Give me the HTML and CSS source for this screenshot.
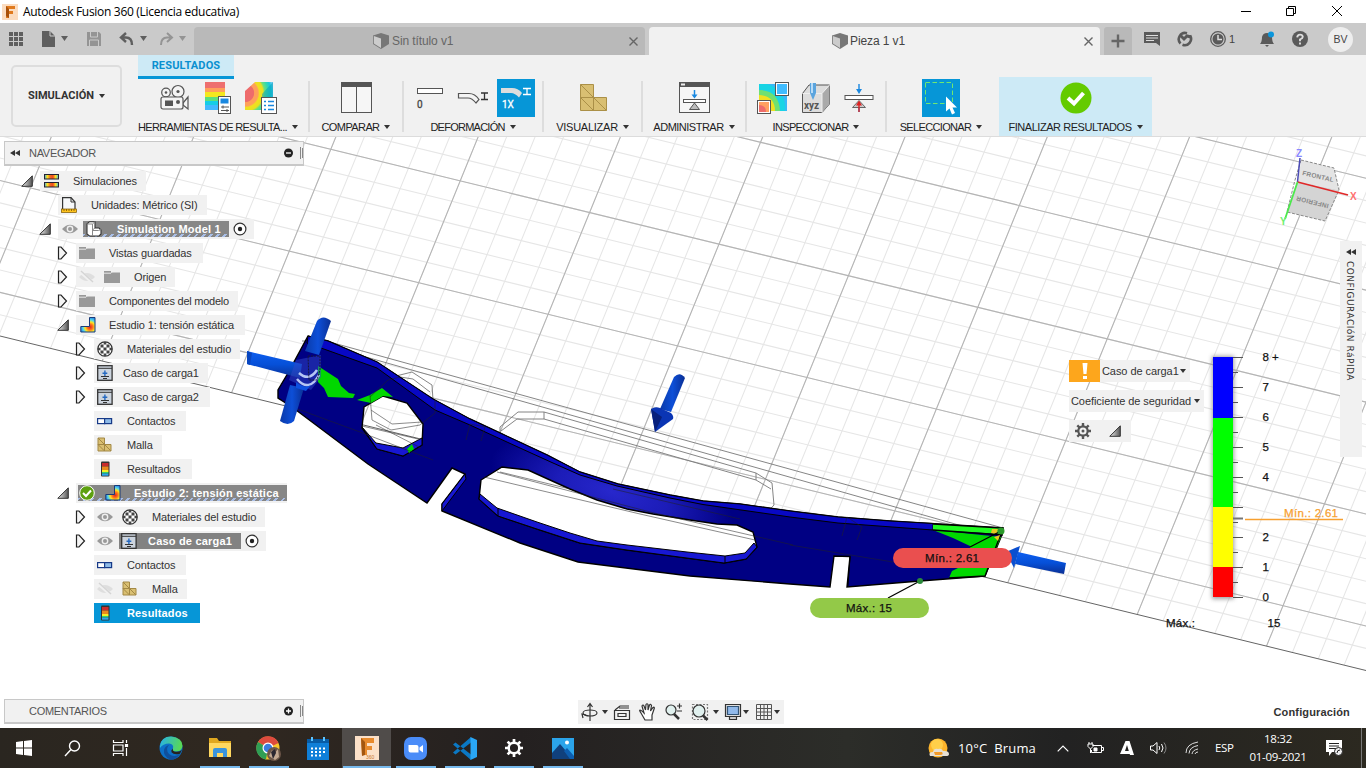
FILE: index.html
```html
<!DOCTYPE html>
<html lang="es">
<head>
<meta charset="utf-8">
<title>Autodesk Fusion 360 (Licencia educativa)</title>
<link rel="stylesheet" href="styles.css">
</head>
<body>
<svg width="0" height="0" class="defs">
  <defs>
    <linearGradient id="rain" x1="0" y1="0" x2="0" y2="1">
      <stop offset="0" stop-color="#d43a3a"/><stop offset=".35" stop-color="#f37a20"/><stop offset=".55" stop-color="#ffe600"/><stop offset=".75" stop-color="#35d46a"/><stop offset="1" stop-color="#2aa8ff"/>
    </linearGradient>
    <radialGradient id="heat" gradientUnits="userSpaceOnUse" cx="3" cy="14" r="29">
      <stop offset=".3" stop-color="#ee6b6b"/><stop offset=".33" stop-color="#ffa05a"/><stop offset=".45" stop-color="#ffa05a"/><stop offset=".5" stop-color="#f0e020"/><stop offset=".62" stop-color="#e8e020"/><stop offset=".68" stop-color="#6ee07a"/><stop offset=".8" stop-color="#30d8b0"/><stop offset=".9" stop-color="#18c8e0"/><stop offset="1" stop-color="#7cccf4"/>
    </radialGradient>
    <radialGradient id="hot" cx=".5" cy="0" r=".9">
      <stop offset="0" stop-color="#e02020"/><stop offset=".4" stop-color="#ff8a1e"/><stop offset=".65" stop-color="#ffe61e"/><stop offset=".85" stop-color="#48d0d0"/><stop offset="1" stop-color="#2b7fe0"/>
    </radialGradient>
    <linearGradient id="strip" x1="0" y1="0" x2="1" y2="0">
      <stop offset="0" stop-color="#3aa8e8"/><stop offset=".2" stop-color="#ffe61e"/><stop offset=".4" stop-color="#f06a20"/><stop offset=".6" stop-color="#f04a20"/><stop offset=".8" stop-color="#ffe61e"/><stop offset="1" stop-color="#3ab8e8"/>
    </linearGradient>
    <radialGradient id="bend" gradientUnits="userSpaceOnUse" cx="10" cy="10" r="10">
      <stop offset="0" stop-color="#e02020"/><stop offset=".3" stop-color="#ff7a1e"/><stop offset=".5" stop-color="#ffe61e"/><stop offset=".7" stop-color="#58d8e8"/><stop offset="1" stop-color="#1f7fe8"/>
    </radialGradient>
    <linearGradient id="triG" x1="0" y1="0" x2="1" y2="0"><stop offset="0" stop-color="#eee"/><stop offset="1" stop-color="#555"/></linearGradient>
    <symbol id="open" viewBox="0 0 12 12"><path d="M.8 11.3L11.3.8V11.3Z" fill="url(#triG)" stroke="#333"/></symbol>
    <symbol id="closed" viewBox="0 0 12 14"><path d="M1.500 1H4L9.500 7 4 13H1.500Z" fill="#f4f4f4" stroke="#222" stroke-width="1.200"/></symbol>
    <symbol id="eye" viewBox="0 0 16 16"><path d="M0 8Q8-.5 16 8 8 16.500 0 8Z" fill="#999"/><circle cx="8" cy="8" r="3.400" fill="#eee"/><circle cx="8" cy="8" r="2" fill="#999"/></symbol>
    <symbol id="eyeoff" viewBox="0 0 16 16"><path d="M0 8Q8 0 16 8 8 16 0 8Z" fill="#dedede"/><path d="M1.500 3L14 14" stroke="#f1f1f1" stroke-width="3"/><path d="M2 2L14 13" stroke="#d4d4d4" stroke-width="1.400"/></symbol>
    <symbol id="folder" viewBox="0 0 16 16"><path d="M0 2H7V3.600H16V14H0Z" fill="#999"/><path d="M0 4.200H7L8 3.200" stroke="#e8e8e8" fill="none"/></symbol>
    <symbol id="sims" viewBox="0 0 16 16"><rect x=".5" y="1.500" width="14" height="4.500" fill="url(#strip)" stroke="#223"/><rect x=".5" y="9.500" width="14" height="4.500" fill="url(#strip)" stroke="#223"/></symbol>
    <symbol id="units" viewBox="0 0 16 16"><path d="M1.600 12V.6H10L14 5V12" fill="#f6f8fa" stroke="#333" stroke-width="1.200"/><path d="M10 .6V5H14" fill="none" stroke="#333"/><rect x=".5" y="12" width="15" height="3.500" fill="#ffc31e" stroke="#7a5500" stroke-width=".7"/><path d="M3 12v2M5.500 12v2M8 12v2M10.500 12v2M13 12v2" stroke="#7a5500" stroke-width=".8"/></symbol>
    <symbol id="body" viewBox="0 0 16 16"><path d="M1 3L3.500.7H9V7H13L15 9V13L13 15H3.500L1 13Z" fill="#fff" stroke="#333" stroke-width="1.100"/><path d="M1 3H6.500L9 .7M6.500 3V9L9 7M6.500 9V15M6.500 9.500H12.500L15 8.500" fill="none" stroke="#888"/></symbol>
    <symbol id="study" viewBox="0 0 16 16"><path d="M9.500.5H15V15H.8V9.500H9.500Z" fill="url(#bend)" stroke="#1b3a78"/></symbol>
    <symbol id="mat" viewBox="0 0 16 16"><circle cx="8" cy="8" r="7.200" fill="#fff" stroke="#333" stroke-width="1.300"/><g fill="#444"><path d="M6.500 6.500h3v3h-3zM3.500 3.500h3v3h-3zM9.500 3.500h3v3h-3zM3.500 9.500h3v3h-3zM9.500 9.500h3v3h-3zM6.700 1h2.600v2.500H6.700zM6.700 12.500h2.600V15H6.700zM1 6.700h2.500v2.600H1zM12.500 6.700H15v2.600h-2.500z"/></g></symbol>
    <symbol id="load" viewBox="0 0 16 16"><rect x=".7" y=".7" width="14.400" height="14.600" fill="#ccd4de" stroke="#333" stroke-width="1.300"/><path d="M1 3.300H15" stroke="#333"/><path d="M7.900 5.500V11M5.500 8.200H10.300" stroke="#2468c0" stroke-width="1.400"/><path d="M4 11.500H12M6 13.500H10" stroke="#333"/></symbol>
    <symbol id="contact" viewBox="0 0 16 16"><rect x=".6" y="5.600" width="7" height="5" fill="#fff" stroke="#173a88" stroke-width="1.200"/><rect x="7.600" y="5.600" width="7" height="5" fill="#8fbbe8" stroke="#173a88" stroke-width="1.200"/></symbol>
    <symbol id="mesh" viewBox="0 0 16 16"><path d="M1 1H7.500V7.500H14V14H1ZM1 7.500H7.500V14M1 1L7.500 7.500 14 14M1 7.500L7.500 14" fill="#d9bf72" stroke="#a38844"/></symbol>
    <symbol id="res" viewBox="0 0 16 16"><rect x="4" y=".6" width="8.500" height="15" rx="1" fill="#333"/><path fill="#c92c2c" d="M5 2h6.500v3.500H5z"/><path fill="#e98a1e" d="M5 5.500h6.500V9H5z"/><path fill="#f7ee26" d="M5 9h6.500v2H5z"/><path fill="#35d46a" d="M5 11h6.500v1.500H5z"/><path fill="#2aa8f0" d="M5 12.500h6.500v2.200H5z"/></symbol>
    <symbol id="ok" viewBox="0 0 16 16"><circle cx="8" cy="8" r="7.300" fill="#5da010" stroke="#fff"/><path d="M4 8l3 3 5-5.500" stroke="#fff" stroke-width="2" fill="none"/></symbol>
    <symbol id="radio" viewBox="0 0 14 14"><circle cx="7" cy="7" r="5.900" fill="#fff" stroke="#333" stroke-width="1.200"/><circle cx="7" cy="7" r="2.200" fill="#222"/></symbol>
    <symbol id="cube" viewBox="0 0 16 16"><path d="M8 0l8 2.500v8.500L8 16 0 11V2.500Z" fill="#777"/><path d="M.8 3L8 5.500V15L.8 10.600Z" fill="#ccc"/></symbol>
    <symbol id="gear" viewBox="0 0 16 16"><circle cx="8" cy="8" r="4.700" fill="none" stroke="currentColor" stroke-width="2.200"/><path d="M8 0V3M8 13V16M0 8H3M13 8H16M2.300 2.300l2.200 2.200M11.500 11.500l2.200 2.200M2.300 13.700l2.200-2.200M11.500 4.500l2.200-2.200" stroke="currentColor" stroke-width="2.400"/></symbol>
    <symbol id="inspectHeat" viewBox="0 0 38 38"><path d="M5 7H33V34H5Z" fill="#38b8f8"/><path d="M5 7h8a24 24 0 0 1 18 27H5z" fill="#18d4e4"/><path d="M5 13q20 0 21 21H5z" fill="#70e070"/><path d="M5 18q16 1 16 16H5z" fill="#f0e020"/><rect x="3.500" y="23.500" width="13" height="13" fill="#fff" stroke="#555"/><path d="M5 25H15V35H5Z" fill="#ffa060"/><path d="M5 28q7 0 7 7H5z" fill="#ee6b6b"/><rect x="21.500" y="5.500" width="13" height="13" fill="#fff" stroke="#555"/><path d="M23 7H33V17H23Z" fill="#40bcff"/></symbol>
  </defs>
</svg>

<header class="title">
  <svg width="16" height="16" viewBox="0 0 16 16"><path d="M0 0H16V16H0Z" fill="#fbdcc0"/><path d="M4 2H13V5H7V7H11V10H7V14H4Z" fill="#e07a1e"/><path d="M4 2L7 5V14L4 12Z" fill="#a8500a"/></svg>
  <span class="title-text">Autodesk Fusion 360 (Licencia educativa)</span>
  <svg class="winbtns" width="124" height="20" viewBox="0 0 124 20" fill="none" stroke="#000"><path d="M16 9.500H26M61.500 6.500h7v7h-7zM63.500 6V4.500h7v7H69M107 4l10 10M117 4L107 14"/></svg>
</header>

<nav class="tabs">
  <div class="quick">
    <svg width="194" height="32" viewBox="0 0 194 32" fill="#5f5f5f"><path d="M9 9h4v4H9zM14 9h4v4h-4zM19 9h4v4h-4zM9 14h4v4H9zM14 14h4v4h-4zM19 14h4v4h-4zM9 19h4v4H9zM14 19h4v4h-4zM19 19h4v4h-4zM42 8h8l5 5v11H42zM61 13h7l-3.500 5zM140 13h7l-3.500 5z"/><path d="M50 8v5h5" stroke="#ccc" fill="none"/><path d="M87 9h12l2 2v12H87z" fill="#949494"/><path d="M90.500 9v5h7V9M89.500 23v-6h9v6" fill="none" stroke="#cacaca"/><path d="M126 10l-5 4.500 5 4.500M121 14.500h5q6 0 6 7.500" fill="none" stroke="#5f5f5f" stroke-width="2.400"/><g fill="#949494"><path d="M179 13h7l-3.500 5z"/><path d="M167 10l5 4.500-5 4.500M172 14.500h-5q-6 0-6 7.500" fill="none" stroke="#949494" stroke-width="2"/></g></svg>
  </div>
  <div class="tab"><svg width="16" height="16"><use href="#cube"/></svg><span>Sin título v1</span><svg class="x" width="9" height="9" viewBox="0 0 9 9"><path d="M.5.5l8 8M8.500.5l-8 8" stroke="#666" stroke-width="1.400"/></svg></div>
  <div class="tab active"><svg width="16" height="16"><use href="#cube"/></svg><span>Pieza 1 v1</span><svg class="x" width="9" height="9" viewBox="0 0 9 9"><path d="M.5.5l8 8M8.500.5l-8 8" stroke="#666" stroke-width="1.400"/></svg></div>
  <div class="plus"><svg width="14" height="14" viewBox="0 0 14 14"><path d="M7 .5v13M.5 7h13" stroke="#666" stroke-width="2.400"/></svg></div>
  <div class="status">
    <svg width="16" height="16" viewBox="0 0 16 16"><path d="M0 1H16V15L12 12H0Z" fill="#5a5a5a"/><path d="M2 4.500H14M2 7H14M2 9.500H10" stroke="#ddd"/></svg>
    <svg width="16" height="16" viewBox="0 0 16 16" fill="none" stroke="#5a5a5a" stroke-width="2.600"><path d="M3.500 12.500A6.300 6.300 0 0 1 10 2.200M13 4.500A6.300 6.300 0 0 1 5.500 13.800"/><path d="M3 4l4 4 3-3 4 1" stroke-width="3"/></svg>
    <span class="jobs"><svg width="16" height="16" viewBox="0 0 16 16"><circle cx="8" cy="8" r="7.300" fill="none" stroke="#5a5a5a" stroke-width="1.300"/><circle cx="8" cy="8" r="5.500" fill="#5a5a5a"/><path d="M8 4v4.500h4" stroke="#ddd" fill="none" stroke-width="1.500"/></svg>1</span>
    <svg width="16" height="16" viewBox="0 0 16 16"><path d="M1 13q2-2 2-7 1-4 5-4t5 4q0 5 2 7zM6 14h4l-2 2z" fill="#5a5a5a"/><circle cx="12" cy="3.500" r="3" fill="#0a96dc"/></svg>
    <svg width="16" height="16" viewBox="0 0 16 16"><circle cx="8" cy="8" r="8" fill="#5a5a5a"/><path d="M5.200 6.300Q5.500 3.600 8 3.600t2.800 2.200Q10.800 7.300 8 8.500V10.200M8 11.500v2" stroke="#ddd" fill="none" stroke-width="1.900"/></svg>
    <b class="avatar">BV</b>
  </div>
</nav>

<section class="ribbon">
  <div class="workspace">SIMULACIÓN<i class="dn"></i></div>
  <div class="rtab">RESULTADOS</div>
  <div class="groups">
    <div class="group g1"><div class="icons">
      <svg viewBox="0 0 38 38"><g fill="#f4f4f4" stroke="#555" stroke-width="1.200"><circle cx="10" cy="13.500" r="4.300"/><circle cx="22" cy="12.500" r="6"/><path d="M27 24l5-6v12l-5-4z"/><rect x="5" y="18" width="22" height="12" rx="2"/></g><circle cx="10" cy="13.500" r="1.300" fill="#555"/><circle cx="22" cy="12.500" r="1.600" fill="#555"/><rect x="9" y="21.500" width="8" height="5.500" fill="#555"/><circle cx="22" cy="23" r="2" fill="#555"/></svg>
      <svg viewBox="0 0 38 38"><path fill="#ee6f6f" d="M6 3h20v6H6z"/><path fill="#ffa05a" d="M6 9h20v4H6z"/><path fill="#f4e81e" d="M6 13h20v5H6z"/><path fill="#5ddf7c" d="M6 18h20v4H6z"/><path fill="#15cde6" d="M6 22h20v4H6z"/><path fill="#42b8ff" d="M6 26h20v5H6z"/><rect x="19.500" y="17.500" width="12" height="17" fill="#fff" stroke="#555"/><path fill="#1a88e0" d="M21.500 19.500h8v5h-8z"/><path d="M22 28h8M22 31.500h8M24 26.500v3M28 30v3" stroke="#555"/></svg>
      <svg viewBox="0 0 38 38"><path d="M3 12L13 3H31V20L20 31H3Z" fill="url(#heat)"/><path d="M31 3V20L20 31V15Z" fill="#08a4bc" opacity=".55"/><rect x="19.500" y="18.500" width="15" height="16" fill="#fff" stroke="#555"/><path d="M22 22.500h2M22 26.500h2M22 30.500h2M26 22.500h6M26 26.500h6M26 30.500h6" stroke="#1a88e0" stroke-width="1.400"/></svg>
    </div><div class="lab">HERRAMIENTAS DE RESULTA...<i class="dn"></i></div></div>
    <div class="group g2"><div class="icons"><svg viewBox="0 0 38 38"><rect x="4.500" y="3.500" width="30" height="30" fill="#f6f6f6" stroke="#555"/><path d="M4 3h31v5H4z" fill="#555"/><path d="M19.500 8v26" stroke="#555"/></svg></div><div class="lab">COMPARAR<i class="dn"></i></div></div>
    <div class="group g3"><div class="icons">
      <svg viewBox="0 0 38 38"><rect x="6.500" y="9.500" width="25" height="5" fill="#fff" stroke="#555"/><text x="6" y="29" class="mini">0</text></svg>
      <svg viewBox="0 0 38 38"><path d="M4.500 14.500H15q6 0 10 6l-3 3.500q-4-5-8-5H4.500Z" fill="#f4f4f4" stroke="#555" stroke-width="1.200"/><path d="M27 14h7M27 20.500h7M30.500 14v6.500" stroke="#333" stroke-width="1.300"/></svg>
      <svg class="on" viewBox="0 0 38 38"><path d="M4 9H15q6 0 10 5l-3 4.500q-4-4.500-8-4.500H4Z" fill="#ddd"/><path d="M26 9.500h8M26 15.500h8M30 9.500v6" stroke="#fff" stroke-width="1.300"/><text x="5" y="29" class="mini w">1X</text></svg>
    </div><div class="lab">DEFORMACIÓN<i class="dn"></i></div></div>
    <div class="group g4"><div class="icons"><svg viewBox="0 0 38 38"><path d="M6.500 5.500h13v13h13v13h-26zM6.500 18.500h13v13M6.500 5.500l13 13 13 13M6.500 18.500l13 13" fill="#d9bf72" stroke="#ab9047"/></svg></div><div class="lab">VISUALIZAR<i class="dn"></i></div></div>
    <div class="group g5"><div class="icons"><svg viewBox="0 0 38 38"><rect x="4.500" y="3.500" width="30" height="30" fill="#f6f6f6" stroke="#555"/><path d="M4 3h31v5H4z" fill="#555"/><path d="M6 4.500h4v2H6z" fill="#eee"/><path d="M19.500 11v7" stroke="#1a88e0" stroke-width="1.500"/><path d="M16.500 15.500h6l-3 4z" fill="#1a88e0"/><rect x="8.500" y="20.500" width="22" height="3" fill="#fff" stroke="#555"/><path d="M19.500 24l5 6.500h-10z" fill="#bbb" stroke="#555"/></svg></div><div class="lab">ADMINISTRAR<i class="dn"></i></div></div>
    <div class="group g6"><div class="icons">
      <svg viewBox="0 0 38 38"><use href="#inspectHeat" y="-2"/></svg>
      <svg viewBox="0 0 38 38"><path d="M5.500 14.500L12 6H32.500V25L25 33.500H5.500Z" fill="#ddd" stroke="#555"/><path d="M25 14.500L32.500 6V25L25 33.500Z" fill="#aaa"/><path d="M5.500 14.500H25V33.500M25 14.500L32.500 6" fill="none" stroke="#eee"/><path d="M13 4h6v10l-3 7-3-7z" fill="#5aa4de"/><path d="M14 4h2v10h-2z" fill="#b8dcf8"/><text x="7" y="30" class="xyz">xyz</text></svg>
      <svg viewBox="0 0 38 38"><path d="M19 5v6M19 33V24" stroke="#1a88e0" stroke-width="1.400"/><path d="M16 10h6l-3 5z" fill="#1a88e0"/><rect x="5" y="16.500" width="28" height="4" fill="#fff" stroke="#555"/><path d="M19 21.500l6.500 7h-13z" fill="#ccc" stroke="#666"/><path d="M19 33v-9" stroke="#d22" stroke-width="1.400"/><path d="M16 26.500h6l-3-5z" fill="#d22"/></svg>
    </div><div class="lab">INSPECCIONAR<i class="dn"></i></div></div>
    <div class="group g7"><div class="icons"><svg class="on" viewBox="0 0 38 38"><path d="M3.500 3.500h27v21h-27z" fill="none" stroke="#70e870" stroke-dasharray="4.500 2.500"/><path d="M24 17.500v15l3.500-3 2.500 6 3-1.500-2.500-5.500h4.500z" fill="#fff"/></svg></div><div class="lab">SELECCIONAR<i class="dn"></i></div></div>
    <div class="group g8"><div class="icons"><svg viewBox="0 0 38 38"><circle cx="19" cy="19" r="15.500" fill="#64cb00"/><path d="M11 19l6 5.500 9.500-10.500" fill="none" stroke="#fff" stroke-width="4"/></svg></div><div class="lab">FINALIZAR RESULTADOS<i class="dn"></i></div></div>
  </div>
</section>

<main class="view">
  <svg class="canvas" width="1366" height="591" viewBox="0 137 1366 591">
    <defs>
      <radialGradient id="sheen" gradientUnits="userSpaceOnUse" cx="0" cy="0" r="1" gradientTransform="translate(612 492) rotate(16) scale(125 48)"><stop offset="0" stop-color="#2727cc"/><stop offset=".45" stop-color="#1c1cb8"/><stop offset="1" stop-color="#000083"/></radialGradient>
      <linearGradient id="rod" x1="0" y1="0" x2="0" y2="1"><stop offset="0" stop-color="#0d5ff0"/><stop offset=".5" stop-color="#0650d8"/><stop offset="1" stop-color="#0a2f94"/></linearGradient>
      <linearGradient id="rodv" x1="0" y1="0" x2="1" y2="0"><stop offset="0" stop-color="#0a3aa8"/><stop offset=".5" stop-color="#0d4fd8"/><stop offset="1" stop-color="#0a2f94"/></linearGradient>
      <filter id="glow" x="-1" width="3" y="-.1" height="1.200"><feGaussianBlur stdDeviation="2"/></filter>
      <clipPath id="ground"><path d="M0 137H1366V670.500L0 336Z"/></clipPath>
    </defs>
    <!-- ground grid in skewed cell units: 20 per minor line, 100 per major -->
    <g clip-path="url(#ground)"><g transform="matrix(1.294 .316 -.415 1.018 1153.600 574.100)" fill="none">
      <path d="M-1000.400 -220H200" stroke="#e6e6e6" stroke-width="520" stroke-dasharray=".8 19.200"/>
      <path d="M-400 -480.500V40" stroke="#e6e6e6" stroke-width="1240" stroke-dasharray="1 19"/>
      <path d="M-1000.400 -220H200" stroke="#b4b4b4" stroke-width="520" stroke-dasharray=".8 99.200"/>
      <path d="M-400 -500.500V40" stroke="#b4b4b4" stroke-width="1240" stroke-dasharray="1 99"/>
    </g></g>
    <path d="M0 336L1366 670.500" stroke="#666"/>

    <g fill="none" stroke="#777" stroke-width=".9">
      <path d="M308 336L1003 528M320 344L1001 537M302 341L318 341"/>
      <path d="M518 412H544L756 473L772 483 774 505 762 518 740 519.500 613 489M500 433V427L518 412M501 431L517 419H544L756 480L771 489M544 412V419M756 473V480"/>
      <path d="M388 378L412 372 432 385 433 400M378 386L400 377 413 379 430 392"/>
    </g>
    <path d="M295 360L308 336 328 341 377 362 433 399 470 419 500 433 547 455 580 472 618 484 670 495 703 501 740 504 790 511 838 517 890 521 1003 528 1001 537 985 576 920 581 847 587 850 556.500 834 556 830 587 790 584 690 576 578 562 520 543 442 511 442 504 465 474 452 468 427 503 368 464 292 407 278 398V390L288 373Z
      M364 407L383 396 407 403 423 424 422 445 403 456 377 449 362 428Z
      M481 480L502 467 528 470 550 480 570 489 597 500 627 509 653 514 690 520 717 524 737 525 753 532 757 547 746 559 724 563 627 550 580 543 537 529 498 516 479 499Z" fill="url(#sheen)" fill-rule="evenodd" stroke="#000" stroke-width="1.400"/>
    <path d="M308 336L328 341 377 362 433 399 470 419 500 433 547 455 580 472 618 484 670 495 703 501 740 504 790 511 838 517 890 521 933 523.500V530L838 523 790 517 703 504.500 670 498 617 486 580 475 553 463 520 448 470 425 435 410 377 368 307 343Z" fill="#0808c4" stroke="#000"/>
    <path d="M362 427L376 443 403 448 422 438V445L403 456 377 449ZM480 494L497 508 537 522 570 533 597 541 627 545 687 552 725 556 745 553 754 543 757 547 746 559 724 563 627 550 580 543 537 529 498 516 479 499ZM442 511V504L465 474 466 479Z" fill="#1717d2" stroke="#000"/>
    <path d="M498 508V516M725 556V563M850 557L848 586" stroke="#000"/>
    <path d="M318 366L338 379 341 386 349 393 355 394 353 398 328 397 324 388 318 382ZM357 400L370 395 382 388 393 397 383 396 371 403ZM407 449L412 444 414 449 409 453ZM933 530L1001 537 985 576 949 578 952 571 970 562 970 546 953 538Z" fill="#00d800"/>
    <path d="M933 524L1003 528V534L933 530Z" fill="#20fa20"/>
    <path d="M933 524L1003 528 985 576 949 578M933 530L1003 535" fill="none" stroke="#000" stroke-width="1.300"/>
    <path d="M992 529H998L997 534 991 533ZM994 537L1000 535 998 541Z" fill="#e8c820"/>
    <g fill="none" stroke="#222" stroke-width=".7" opacity=".75">
      <path d="M292 407L360 432 433 460M466 440L470 424 485 427 481 441M842 536L847 517 862 527 857 540M613 489L740 519 M790 545L893 562M497 472L650 512 793 545"/>
      <path d="M370 397L388 380 400 377M370 395L372 420 391 430 420 425 435 413V400M371 410L392 424 422 422M362 426L418 439M376 425L421 448M484 477L640 514 755 540M500 472L570 489"/>
    </g>
    <!-- constraint rods -->
    <g>
      <path d="M247 351L302 364 300 378 247 364Z" fill="url(#rod)"/><path d="M247 351L252 353 250 365 247 364Z" fill="#0846c0"/>
      <path d="M317 321Q323 314 331 321L319 355 305 351Z" fill="url(#rodv)"/>
      <path d="M290 385L304 388 294 421Q288 427 280 421Z" fill="url(#rodv)"/>
      <path d="M296 360l25-5v22l-10 13-22-10z" fill="#3248c8" opacity=".5"/>
      <path d="M299 373q10 9 18-3M297 379q12 14 22-4" fill="none" stroke="#b6c6f4" stroke-width="2.500"/><path d="M296 382q9 7 15 3l-5 6-10-3z" fill="#0d50e0"/><path d="M308 356h12v14l-3 10h-8z" fill="none" stroke="#16163a" stroke-dasharray="2 1"/>
      <path d="M674 377Q680 371 685 378L671 412 660 409Z" fill="url(#rodv)"/><path d="M651 409Q655 406 660 408L671 413Q674 416 673 419L655 432Z" fill="#0a35b4"/><path d="M651 409L662 417 655 432Z" fill="#07207c"/>
      <path d="M1018 552L1066 563 1064 574 1015 564Z" fill="url(#rod)"/><path d="M1006 552L1020 546 1014 568Z" fill="#0a4fd0"/>
    </g>
    <path d="M970 547L1001 531M888 598L920 581" stroke="#000" stroke-width="1.300"/>
    <circle cx="1001" cy="531" r="3.500" fill="#2a9a2a"/><circle cx="920" cy="581" r="3" fill="#2a8a3a"/>
    <rect x="893" y="548" width="119" height="20" rx="10" fill="#ea4f4f"/>
    <rect x="810" y="598" width="119" height="20" rx="10" fill="#93c948"/>
    <g class="ctext"><text x="925" y="562" textLength="54">Mín.: 2.61</text><text x="846" y="612" textLength="46">Máx.: 15</text></g>

    <!-- safety factor scale -->
    <rect x="1212" y="356" width="22" height="243" fill="#888" filter="url(#glow)" opacity=".8"/>
    <path d="M1213 357h20v61h-20z" fill="#00f"/><path d="M1213 418h20v89h-20z" fill="#0f0"/><path d="M1213 507h20v60h-20z" fill="#ff0"/><path d="M1213 567h20v30h-20z" fill="#f00"/>
    <path d="M1238 357V598" stroke="#555" stroke-width="10" stroke-dasharray="1 29"/>
    <path d="M1235.500 372V598" stroke="#555" stroke-width="5" stroke-dasharray="1 29"/><path d="M1233 518.500h10" stroke="#777" stroke-width="2"/>
    <g class="ctext"><text x="1262.500" y="361">8 +</text><text x="1262.500" y="391">7</text><text x="1262.500" y="421">6</text><text x="1262.500" y="451">5</text><text x="1262.500" y="481">4</text><text x="1262.500" y="541">2</text><text x="1262.500" y="571">1</text><text x="1262.500" y="601">0</text><text x="1166" y="627" textLength="29">Máx.:</text><text x="1267.500" y="627">15</text><text x="1284" y="517" class="or" textLength="54">Mín.: 2.61</text></g>
    <path d="M1245 519.500H1343" stroke="#f7a030" stroke-width="1.300"/>

    <!-- orientation cube -->
    <path d="M1301 160L1334 168 1339 190 1298 182Z" fill="#e4e4e4"/><path d="M1298 182L1339 190 1325 221 1287 212Z" fill="#d4d4d4"/>
    <path d="M1301 160L1334 168 1339 190 1325 221 1287 212 1295 180Z" fill="none" stroke="#888" stroke-dasharray="3 1.500"/>
    <text class="cube" transform="translate(1302 175) rotate(13)" textLength="32">FRONTAL</text><text class="cube" transform="translate(1329 204) rotate(194)" textLength="33">INFERIOR</text>
    <path d="M1297.500 182L1300 158" stroke="#4a4ab4" stroke-width="1.500"/><path d="M1297.500 182L1348 195" stroke="#e02828" stroke-width="1.800"/><path d="M1297.500 182L1285 219" stroke="#4be84b" stroke-width="1.800"/>
    <text x="1296" y="157" class="ax z">Z</text><text x="1350" y="200" class="ax r">X</text><text x="1280" y="225" class="ax g">Y</text>
  </svg>

  <aside class="browser">
    <div class="bar"><svg width="10" height="6" viewBox="0 0 10 6"><path d="M5 0v6L0 3zM10 0v6L5 3z" fill="#333"/></svg><span>NAVEGADOR</span><svg class="end" width="19" height="14" viewBox="0 0 19 14"><circle cx="4.500" cy="7" r="4.500" fill="#222"/><path d="M2 7h5" stroke="#fff" stroke-width="1.300"/><path d="M16.500 1v12M18.500 2v10" stroke="#888"/></svg></div>
    <ul class="tree">
      <li class="l0"><svg class="t"><use href="#open"/></svg><div class="n p4"><svg><use href="#sims"/></svg><span>Simulaciones</span></div></li>
      <li class="l1"><i class="t"></i><div class="n g14"><svg><use href="#units"/></svg><span>Unidades: Métrico (SI)</span></div></li>
      <li class="l1"><svg class="t"><use href="#open"/></svg><div class="n p4"><svg><use href="#eye"/></svg><div class="sel model"><svg><use href="#body"/></svg><b>Simulation Model 1</b></div><svg class="rad"><use href="#radio"/></svg></div></li>
      <li class="l2"><svg class="t c"><use href="#closed"/></svg><div class="n g14"><svg><use href="#folder"/></svg><span class="wide">Vistas guardadas</span></div></li>
      <li class="l2"><svg class="t c"><use href="#closed"/></svg><div class="n g14"><svg><use href="#eyeoff"/></svg><svg class="second"><use href="#folder"/></svg><span>Origen</span></div></li>
      <li class="l2"><svg class="t c"><use href="#closed"/></svg><div class="n g14"><svg><use href="#folder"/></svg><span class="tight">Componentes del modelo</span></div></li>
      <li class="l2"><svg class="t"><use href="#open"/></svg><div class="n p4"><svg><use href="#study"/></svg><span class="wide">Estudio 1: tensión estática</span></div></li>
      <li class="l3"><svg class="t c"><use href="#closed"/></svg><div class="n g14"><svg><use href="#mat"/></svg><span>Materiales del estudio</span></div></li>
      <li class="l3"><svg class="t c"><use href="#closed"/></svg><div class="n g10"><svg><use href="#load"/></svg><span>Caso de carga1</span></div></li>
      <li class="l3"><svg class="t c"><use href="#closed"/></svg><div class="n g10"><svg><use href="#load"/></svg><span class="wide">Caso de carga2</span></div></li>
      <li class="l3"><i class="t"></i><div class="n g14"><svg><use href="#contact"/></svg><span class="wide">Contactos</span></div></li>
      <li class="l3"><i class="t"></i><div class="n g14"><svg><use href="#mesh"/></svg><span>Malla</span></div></li>
      <li class="l3"><i class="t"></i><div class="n g14"><svg><use href="#res"/></svg><span class="wide">Resultados</span></div></li>
      <li class="l2"><svg class="t"><use href="#open"/></svg><div class="n p2"><div class="sel study"><svg><use href="#ok"/></svg><svg><use href="#study"/></svg><b>Estudio 2: tensión estática</b></div></div></li>
      <li class="l3"><svg class="t c"><use href="#closed"/></svg><div class="n g14"><svg><use href="#eye"/></svg><svg class="second"><use href="#mat"/></svg><span>Materiales del estudio</span></div></li>
      <li class="l3"><svg class="t c"><use href="#closed"/></svg><div class="n"><svg><use href="#eye"/></svg><div class="sel case"><svg><use href="#load"/></svg><b>Caso de carga1</b></div><svg class="rad"><use href="#radio"/></svg></div></li>
      <li class="l3"><i class="t"></i><div class="n g14"><svg><use href="#contact"/></svg><span class="wide">Contactos</span></div></li>
      <li class="l3"><i class="t"></i><div class="n g14"><svg><use href="#eyeoff"/></svg><svg class="second"><use href="#mesh"/></svg><span>Malla</span></div></li>
      <li class="l3"><i class="t"></i><div class="n g14 blue"><svg><use href="#res"/></svg><b>Resultados</b></div></li>
    </ul>
  </aside>

  <div class="legend">
    <div class="lrow"><b class="warn"><svg width="6" height="18" viewBox="0 0 6 18"><path d="M.5 1h5L4.500 12h-3zM1 14h4v3H1z" fill="#fff"/></svg></b><span>Caso de carga1<i class="dn"></i></span></div>
    <div class="lrow coef"><span>Coeficiente de seguridad<i class="dn"></i></span></div>
    <div class="lrow tools"><svg width="16" height="16" viewBox="0 0 16 16"><use href="#gear"/><circle cx="8" cy="8" r="1.500" fill="#555"/></svg><svg width="12" height="12"><use href="#open"/></svg></div>
  </div>
  <div class="quickset"><svg width="10" height="6" viewBox="0 0 10 6"><path d="M5 0v6L0 3zM10 0v6L5 3z" fill="#333"/></svg><span>CONFIGURACIóN RáPIDA</span></div>

  <div class="bar comments"><span>COMENTARIOS</span><svg class="end" width="19" height="14" viewBox="0 0 19 14"><circle cx="4.500" cy="7" r="4.500" fill="#222"/><path d="M2 7h5M4.500 4.500v5" stroke="#fff" stroke-width="1.300"/><path d="M16.500 1v12M18.500 2v10" stroke="#888"/></svg></div>
  <div class="navtools">
    <svg width="206" height="24" viewBox="0 0 206 24" fill="none" stroke="#333" stroke-width="1.200">
      <ellipse cx="12" cy="13" rx="7" ry="3"/><path d="M12 4v17M9.500 7L12 3.500 14.500 7M5 18l-1-4 4 1"/>
      <path d="M36.500 10.500h15v9h-15zM40 13.500h8v3h-8zM37 10l5-4h9M41 8h10"/>
      <path d="M67 20l-4-7q-2-3-1-3t4 3L64 6q1-2 2 0l1.500 4L68 4.500q1-1.500 2 0V10l1.500-5q1-1.500 2 .5L72.500 11 75 7.500q1.500-1 1.300.8L74 15v5z" fill="#fff"/>
      <circle cx="93" cy="10" r="5" fill="#e0f0ee"/><path d="M96 14l5 5" stroke-width="2.500"/><path d="M99 6h5M101.500 3.500v5M99 11h5"/>
      <path d="M114.500 4.500h15v15h-15z" stroke-dasharray="2 1.500" stroke="#777"/><circle cx="121" cy="11" r="6" fill="#e0f0ee"/><path d="M125 15.500l4.500 4.500" stroke-width="2.500"/>
      <path d="M147.500 4.500h15v12h-15z" fill="#ddd" /><path d="M149.500 6.500h11v8h-11z" fill="#91b9ea" stroke="#357"/><path d="M151.500 19.500h7v-3h-7z" fill="#ccc"/>
      <path d="M178.500 4.500h15v15h-15zM182.500 4.500v15M186 4.500v15M189.500 4.500v15M178.500 8.500h15M178.500 12h15M178.500 15.500h15" stroke="#555" stroke-width="1"/>
      <path d="M24 10h6l-3 4zM135 10h6l-3 4zM165 10h6l-3 4zM196 10h6l-3 4z" fill="#333" stroke="none"/>
    </svg>
  </div>
  <b class="conf">Configuración</b>
</main>

<footer class="task">
  <div class="tb s"><svg width="16" height="16" viewBox="0 0 16 16"><path d="M0 2l7-1v6.600H0zM8 .9L16 0v7.600H8zM0 8.500h7V15l-7-1zM8 8.500h8V16l-8-1z" fill="#fff"/></svg></div>
  <div class="tb s"><svg width="17" height="17" viewBox="0 0 17 17"><circle cx="10.500" cy="6" r="5" fill="none" stroke="#fff" stroke-width="1.400"/><path d="M7 9.500L1 16" stroke="#fff" stroke-width="1.400"/></svg></div>
  <div class="tb s"><svg width="17" height="16" viewBox="0 0 17 16" fill="none" stroke="#fff" stroke-width="1.200"><path d="M1.500 5h9.500v6H1.500zM1.500 0v2.500h9.500V0M1.500 16v-2.500h9.500V16M14.500 0v3M14.500 8v8"/><path d="M13.500 4.500h2v2h-2z" fill="#fff"/></svg></div>
  <div class="tb"><svg width="24" height="24" viewBox="0 0 24 24"><defs><linearGradient id="ed" x1="0" y1="0" x2="1" y2=".2"><stop offset="0" stop-color="#26b0ea"/><stop offset="1" stop-color="#58d858"/></linearGradient></defs><circle cx="12" cy="12" r="11.500" fill="#0c70c8"/><path d="M1 10Q2 .5 12 .5 23.500 1.500 23.500 10q-.5 5.500-7 5.500-4 0-2.500-3Q15 8 10 7.500 4 7.500 1 12z" fill="url(#ed)"/><path d="M10 9q-4 4 0 9 5 4 11 0-4 6-10 5.500Q4 20 5 14q1-4 5-5z" fill="#0f4f9c"/><path d="M14 12.500q-1 3 3 3.200 4 .3 6-2l-2 4q-6 1.500-8.500-1.500-1-2 1.500-3.700z" fill="#26231f"/></svg></div>
  <div class="tb run"><svg width="22" height="20" viewBox="0 0 22 20"><path d="M0 0h8l2 3h12v16H0z" fill="#e0a820"/><path d="M0 5h22v14H0z" fill="#ffd860"/><path d="M4 19v-7q0-2 2-2h10q2 0 2 2v7h-4v-4H8v4z" fill="#3a94dc"/></svg></div>
  <div class="tb run"><svg width="26" height="25" viewBox="0 0 26 25"><circle cx="12" cy="12" r="11.500" fill="#f7c52c"/><path d="M12 12L2 6A11.500 11.500 0 0 1 22.500 7z" fill="#dd4b3e"/><path d="M12 12l-2 11.500A11.500 11.500 0 0 1 2 6z" fill="#2f9e55"/><circle cx="12" cy="12" r="5.500" fill="#fff"/><circle cx="12" cy="12" r="4.300" fill="#3c7de0"/><circle cx="18" cy="18" r="7" fill="#6c5648"/><path d="M13 20l3-6 2 4 4-5 1 8-4 3z" fill="#c3a892"/><path d="M15 16l4-3 1 4-3 6z" fill="#2a2630"/></svg></div>
  <div class="tb"><svg width="22" height="23" viewBox="0 0 22 23"><path d="M0 2h22v21H0z" fill="#0f7fd8"/><path d="M0 2h22v4H0z" fill="#075ba4"/><path d="M5 0v4M17 0v4" stroke="#5cc4ff" stroke-width="2"/><path d="M4 11.500h14M4 15h14M4 18.500h11" stroke="#fff" stroke-width="2" stroke-dasharray="2 2"/></svg></div>
  <div class="tb run cur"><svg width="24" height="24" viewBox="0 0 24 24"><path d="M0 0h24v24H0z" fill="#fbe0c8"/><path d="M6 2H19V7H12V10H17V14H12V19H7Z" fill="#e88a2c"/><path d="M6 2L10 6V19L7 20Z" fill="#a3560f"/><text x="11" y="22.500" class="m360">360</text></svg></div>
  <div class="tb run"><svg width="23" height="23" viewBox="0 0 23 23"><rect width="23" height="23" rx="7" fill="#4a8cf8"/><path d="M4.500 8h8q2 0 2 2v5.500h-8q-2 0-2-2zM15.500 10.500L19 8v7.500l-3.500-2.500z" fill="#fff"/></svg></div>
  <div class="tb run"><svg width="24" height="23" viewBox="0 0 24 23"><path d="M0 7.500L2.500 5.500 18 17.500V23zM0 15.500l2.500 2L18 5.500V0z" fill="#0b78c4"/><path d="M17.500 0L24 3v17l-6.500 3z" fill="#2aa6f4"/></svg></div>
  <div class="tb run white"><svg width="18" height="18"><use href="#gear" width="18" height="18"/></svg></div>
  <div class="tb run"><svg width="22" height="21" viewBox="0 0 22 21"><path d="M0 0h22v21H0z" fill="#2ba4ea"/><path d="M0 15L8 6l13 15H0z" fill="#10407c"/><path d="M12 13l3-3 7 8v3h-4z" fill="#0c5eb0"/><circle cx="15" cy="4.500" r="2" fill="#fff"/></svg></div>
  <div class="tray">
    <svg width="21" height="20" viewBox="0 0 21 20"><circle cx="10" cy="10" r="9.500" fill="#fdb52c"/><circle cx="9" cy="7" r="6" fill="#ffcf4a"/><path d="M2 18q-2-4 3-4 1-4 5-3 4-1 5 2 6-.5 6 3 0 2-3 2z" fill="#e6e0d4"/><path d="M6 14h8q2 3-2 3H7z" fill="#f29b2a"/></svg>
    <span class="wx">10°C&nbsp; Bruma</span>
    <svg class="chev" width="12" height="7" viewBox="0 0 12 7"><path d="M.7 6.300L6 1l5.300 5.300" fill="none" stroke="#fff" stroke-width="1.200"/></svg>
    <svg class="bat" width="17" height="12" viewBox="0 0 17 12" fill="none" stroke="#fff"><path d="M5.500 3.500h9v7h-10V8M15 5.500h1.500v3H15M1 2h5v2.500L3.500 7 1 4.500zM2 0v2M5 0v2M3.500 7v4"/><path d="M7 6h3v3H7z" fill="#fff"/></svg>
    <svg class="aa" width="14" height="14" viewBox="0 0 14 14"><path d="M5.500 0h4L14 14h-4L7 4 5 10h4l1 3H0z" fill="#fff"/></svg>
    <svg class="spk" width="17" height="14" viewBox="0 0 17 14" fill="none" stroke="#fff"><path d="M.5 5h2.500L7 1.500v11L3 9H.5zM9 5q1.500 2 0 4M11.500 3q3 4 0 8"/><path d="M14 1.500q4 5.500 0 11" stroke="#888"/></svg>
    <svg class="wifi" width="14" height="14" viewBox="0 0 14 14" fill="none" stroke="#ddd"><path d="M1 12Q1 3 13 1M4 12.500Q4.500 6 13 4.500M7 13Q7.500 9 13 8M10 13q.5-2 3-2"/></svg>
    <span class="esp">ESP</span>
    <span class="clock">18:32<br>01-09-2021</span>
    <svg class="notif" width="17" height="17" viewBox="0 0 17 17"><path d="M0 0h16v12H6l-3 4v-4H0z" fill="#fff"/><path d="M3 3.500h10M3 6h10M3 8.500h7" stroke="#222"/><circle cx="12.500" cy="11.500" r="4" fill="#eee" stroke="#222"/><path d="M11 13q0-3 3-3" stroke="#222" fill="none"/></svg>
    <i class="peek"></i>
  </div>
</footer>
</body>
</html>
```
FILE: styles.css
```css
* { box-sizing: border-box; }
body { margin: 0; width: 1366px; height: 768px; overflow: hidden; display: flex; flex-direction: column; background: #fff; font: 11px/14px "Liberation Sans", Arial, sans-serif; color: #333; }
svg { display: block; flex: none; }
span, b { white-space: nowrap; }
.defs { position: absolute; }
.dn { display: inline-block; border: 3px solid transparent; border-top: 4px solid #333; border-bottom: 0; margin-left: 5px; vertical-align: 2px; }

.title { height: 23px; flex: none; display: flex; align-items: center; padding: 0 13px 0 2px; background: #fff; }
.title-text { margin-left: 5px; font: 12px/16px "Open Sans", "Noto Sans", sans-serif; color: #000; letter-spacing: -.3px; }
.winbtns { margin-left: auto; margin-right: 5px; }
.title .winbtns { margin-right: 4px; }

.tabs { height: 32px; flex: none; display: flex; align-items: flex-end; background: #cacaca; }
.quick { width: 194px; height: 32px; }
.tab { width: 451px; height: 28px; margin-right: 4px; display: flex; align-items: center; padding: 0 7px 0 179px; background: #b9b9b9; border-radius: 4px 4px 0 0; font-size: 12px; color: #666; letter-spacing: -.1px; }
.tab span { margin-left: 3px; }
.tab.active { background: #f1f1f1; color: #444; padding-left: 183px; }
.tab.active span { margin-left: 2px; }
.tab .x { margin-left: auto; }
.plus { width: 28px; height: 28px; display: grid; place-items: center; background: #b9b9b9; border-radius: 3px 3px 0 0; }
.status { flex: 1; height: 32px; display: flex; align-items: center; padding-left: 12px; }
.status > svg { margin-right: 17px; }
.status .jobs { display: flex; align-items: center; gap: 3px; width: 49px; font-size: 11px; color: #444; }
.avatar { width: 25px; height: 25px; margin-left: 3px; border-radius: 50%; display: grid; place-items: center; background: #eee; font-weight: 400; font-size: 10.500px; color: #444; }

.ribbon { height: 82px; flex: none; display: grid; grid-template: 22px 60px / 127px 1fr; background: #f1f1f1; border-bottom: 1px solid #dcdcdc; }
.workspace { grid-row: 1 / 3; width: 111px; height: 62px; margin: 10px 0 0 11px; display: flex; align-items: center; justify-content: center; border: 2px solid #ddd; border-radius: 5px; font: bold 11px/14px Roboto, sans-serif; }
.rtab { width: 96px; height: 24px; margin-left: 11px; border-bottom: 3px solid #0696d7; background: #cdeaf6; color: #0a90d0; font: bold 11px/22px Roboto, sans-serif; letter-spacing: .15px; text-align: center; }
.groups { grid-column: 2; display: flex; }
.group { position: relative; height: 59px; }
.group::after { content: ""; position: absolute; right: -1px; top: 4px; width: 2px; height: 51px; background: #ddd; }
.g1 { width: 182px; letter-spacing: -.67px; }
.g2 { width: 94px; letter-spacing: -.6px; }
.g3 { width: 140px; letter-spacing: -.75px; }
.g4 { width: 99px; letter-spacing: -.25px; }
.g5 { width: 104px; letter-spacing: -.5px; }
.g6 { width: 140px; letter-spacing: -.65px; }
.g7 { width: 110px; letter-spacing: -.65px; }
.g8 { width: 153px; margin-left: 3px; background: #cdeaf6; letter-spacing: -.45px; }
.g7::after, .g8::after { display: none; }
.icons { display: flex; justify-content: center; gap: 5px; height: 38px; margin-top: 2px; letter-spacing: 0; }
.icons svg { width: 38px; height: 38px; }
.icons .on { background: #0696d7; }
.lab { height: 14px; margin-top: 3px; text-align: center; white-space: nowrap; font: 11px/14px "Liberation Sans", sans-serif; color: #222; }
.lab .dn { margin-left: 5px; }
.mini { font: 10px Roboto, sans-serif; fill: #444; stroke: #444; stroke-width: .3; }
.w { fill: #fff; stroke: #fff; }
.xyz { font: bold 10px Roboto, sans-serif; fill: #555; }

.view { position: relative; height: 591px; flex: none; background: #fff; }
.canvas { position: absolute; inset: 0; }
.ctext { font: 11.500px "Liberation Sans", sans-serif; fill: #111; stroke: #111; stroke-width: .25; }
.or { fill: #f7a030; stroke: #f7a030; }
.cube { font: bold 6.500px "Liberation Sans", sans-serif; fill: #888; }
.ax { font: bold 10px "Liberation Sans", sans-serif; }
.z { fill: #8888ff; } .r { fill: #ff7070; } .g { fill: #70f070; }

.browser { position: absolute; left: 4px; top: 4px; width: 300px; }
.bar { height: 25px; display: flex; align-items: center; padding: 0 0 0 5px; background: #f1f1f1; border: 1px solid #c8c8c8; border-width: 1px 1px 2px; color: #555; }
.bar span { margin-left: 9px; letter-spacing: -.3px; }
.bar .end { margin-left: auto; }
.tree { margin: 3px 0 0; padding: 0; list-style: none; }
.tree li { height: 24px; display: flex; align-items: center; }
.l0 { padding-left: 17px; } .l1 { padding-left: 35px; } .l2 { padding-left: 53px; } .l3 { padding-left: 71px; }
.t { width: 12px; height: 12px; margin-right: 7px; }
.t.c { width: 12px; height: 14px; }
.n { height: 20px; display: flex; align-items: center; padding-left: 3px; background: #f1f1f1; }
.n svg { width: 16px; height: 16px; }
.n span { margin-left: 13px; padding-right: 9px; letter-spacing: -.13px; }
.n .wide { padding-right: 11px; }
.n .tight { letter-spacing: -.25px; }
.p4 { padding-left: 4px; } .p2 { padding-left: 2px; }
.g14 span, .g14 b { margin-left: 14px; }
.g10 span { margin-left: 10px; }
.n .second { margin-left: 9px; }
.sel { height: 16px; display: flex; align-items: center; background: #828282; color: #fff; }
.sel b { letter-spacing: .2px; }
.sel.model, .sel.study { background: repeating-linear-gradient(135deg, #a9bfe8 0 2px, #858585 2px 5px) bottom / 100% 3px no-repeat, #878787; }
.model { width: 146px; margin-left: 5px; padding-left: 3px; }
.model b { margin-left: 15px; }
.study { width: 209px; padding-left: 1px; }
.study svg + svg { margin-left: 10px; }
.study b { margin-left: 13px; }
.case { width: 122px; margin-left: 6px; padding-left: 2px; }
.case b { margin-left: 11px; }
.n .rad { width: 14px; height: 14px; margin: 0 7px 0 4px; }
.blue { width: 106px; background: #0696d7; color: #fff; letter-spacing: .15px; }

.legend { position: absolute; left: 1069px; top: 223px; display: flex; flex-direction: column; align-items: flex-start; gap: 8px; }
.lrow { height: 22px; display: flex; align-items: center; background: #f1f1f1; }
.warn { width: 31px; height: 22px; display: grid; place-items: center; background: #fda61c; }
.lrow span { padding: 0 4px 0 2px; letter-spacing: -.07px; }
.lrow .dn { margin-left: 1px; }
.coef .dn { margin-left: 3px; }
.tools { width: 62px; padding-left: 6px; gap: 18px; color: #555; }
.quickset { position: absolute; left: 1340px; top: 104px; width: 22px; height: 216px; padding-top: 8px; display: flex; flex-direction: column; align-items: center; gap: 6px; background: #f1f1f1; }
.quickset span { writing-mode: vertical-rl; font: 9px/12px "DejaVu Sans", sans-serif; letter-spacing: .5px; margin-right: 2px; }
.comments { position: absolute; left: 4px; top: 562px; width: 300px; padding-left: 15px; }
.navtools { position: absolute; left: 578px; top: 563px; background: #f1f1f1; }
.conf { position: absolute; right: 16px; top: 568px; letter-spacing: .15px; }

.task { height: 40px; flex: none; display: flex; background: linear-gradient(90deg, #2a2620, #302820 18%, #242020 38%, #2c2d29 62%, #222 78%, #2c2920); color: #fff; }
.tb { width: 49px; height: 40px; display: grid; place-items: center; }
.tb.s { width: 48px; }
.tb.s:nth-child(3) { width: 50px; padding-right: 2px; }
.run { background: linear-gradient(#76b9ed, #76b9ed) center bottom / 40px 2px no-repeat; }
.cur { background: linear-gradient(#76b9ed, #76b9ed) bottom / 48px 2px no-repeat, #504c4a; }
.white { color: #fff; }
.m360 { font: 5px "Liberation Sans", sans-serif; fill: #c87830; }
.tray { margin-left: auto; width: 438px; display: flex; align-items: center; font: 12px/18px "Open Sans", "Noto Sans", sans-serif; }
.wx { width: 90px; margin-left: 9px; font-size: 13px; letter-spacing: .15px; }
.chev { margin-left: 9px; }
.bat { margin-left: 18px; }
.aa { margin-left: 16px; }
.spk { margin-left: 16px; }
.wifi { margin-left: 18px; }
.esp { margin-left: 16px; width: 20px; font-size: 11.500px; letter-spacing: -.4px; }
.clock { width: 80px; margin-left: 3px; text-align: center; font-size: 11.500px; letter-spacing: -.3px; }
.notif { margin-left: 8px; }
.peek { margin-left: auto; margin-right: 4px; width: 1px; height: 40px; background: #777; }
```
